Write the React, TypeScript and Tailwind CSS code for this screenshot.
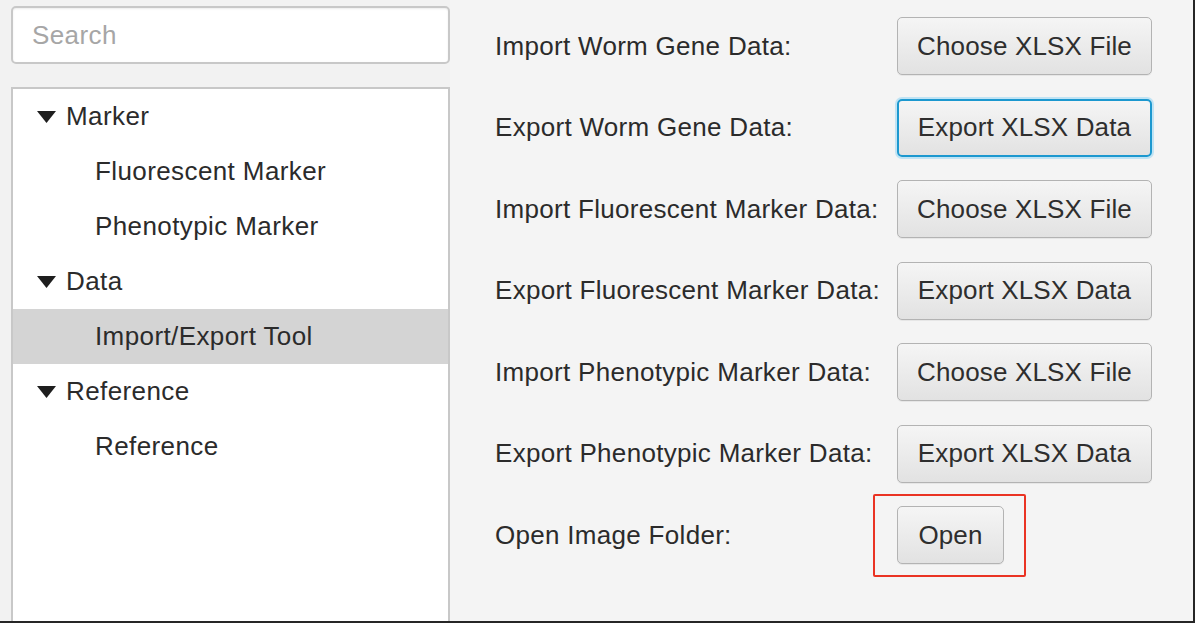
import React from "react";

const font = { fontFamily: '"Liberation Sans", Arial, sans-serif' };

function Tri() {
  return (
    <svg width="19" height="12" viewBox="0 0 19 12" className="shrink-0">
      <polygon points="0,0 19,0 9.5,12" fill="#1e1e1e" />
    </svg>
  );
}

function TreeRow({ label, parent, selected }: { label: string; parent?: boolean; selected?: boolean }) {
  return (
    <div
      className={
        "h-[55px] flex items-center text-[26px] tracking-[0.4px] text-[#2b2b2b] " +
        (selected ? "bg-[#d4d4d4] " : "") +
        (parent ? "pl-[24px]" : "pl-[82px]")
      }
    >
      {parent && <Tri />}
      <span className={parent ? "ml-[10px]" : ""}>{label}</span>
    </div>
  );
}

function Btn({ label, w, focused, mark }: { label: string; w: string; focused?: boolean; mark?: boolean }) {
  return (
    <div className="relative">
      <div
        className={
          "h-[58px] flex items-center justify-center rounded-[5px] bg-gradient-to-b from-[#f5f5f5] to-[#e2e2e2] text-[26px] tracking-[0.15px] text-[#2e2e2e] " +
          w +
          (focused
            ? " border-2 border-[#1c98cf] shadow-[0_0_0_2px_#bfe3f4]"
            : " border border-[#b3b3b3] shadow-[0_1px_0_#e6e6e6]")
        }
      >
        {label}
      </div>
      {mark && (
        <div className="absolute -left-[24px] -right-[22px] -top-[12px] -bottom-[13px] border-2 border-[#ea3323] rounded-[2px]" />
      )}
    </div>
  );
}

export default function App() {
  const rows: { label: string; btn: string; w: string; focused?: boolean; mark?: boolean }[] = [
    { label: "Import Worm Gene Data:", btn: "Choose XLSX File", w: "w-[255px]" },
    { label: "Export Worm Gene Data:", btn: "Export XLSX Data", w: "w-[255px]", focused: true },
    { label: "Import Fluorescent Marker Data:", btn: "Choose XLSX File", w: "w-[255px]" },
    { label: "Export Fluorescent Marker Data:", btn: "Export XLSX Data", w: "w-[255px]" },
    { label: "Import Phenotypic Marker Data:", btn: "Choose XLSX File", w: "w-[255px]" },
    { label: "Export Phenotypic Marker Data:", btn: "Export XLSX Data", w: "w-[255px]" },
    { label: "Open Image Folder:", btn: "Open", w: "w-[107px]", mark: true },
  ];
  return (
    <div
      style={font}
      className="w-[1195px] h-[623px] bg-[#f4f4f4] flex border-r-2 border-b-2 border-[#262626] overflow-hidden"
    >
      <div className="w-[450px] shrink-0 pl-[11px] pt-[6px] flex flex-col bg-[#f2f2f2]">
        <div className="h-[58px] rounded-[5px] border-2 border-[#c8c8c8] bg-white flex items-center pl-[19px] text-[26px] tracking-[0.4px] text-[#a6a6a6] shadow-[inset_0_1px_2px_rgba(0,0,0,0.08)]">
          Search
        </div>
        <div className="mt-[23px] flex-1 border-2 border-b-0 border-[#c8c8c8] bg-white">
          <TreeRow label="Marker" parent />
          <TreeRow label="Fluorescent Marker" />
          <TreeRow label="Phenotypic Marker" />
          <TreeRow label="Data" parent />
          <TreeRow label="Import/Export Tool" selected />
          <TreeRow label="Reference" parent />
          <TreeRow label="Reference" />
        </div>
      </div>
      <div className="flex-1 pl-[45px] pt-[17px]">
        <div className="grid grid-cols-[402px_auto] gap-y-[23.5px] items-center">
          {rows.map((r, i) => (
            <React.Fragment key={i}>
              <div className="text-[26px] tracking-[0.3px] text-[#2b2b2b]">{r.label}</div>
              <div className="flex">
                <Btn label={r.btn} w={r.w} focused={r.focused} mark={r.mark} />
              </div>
            </React.Fragment>
          ))}
        </div>
      </div>
    </div>
  );
}
